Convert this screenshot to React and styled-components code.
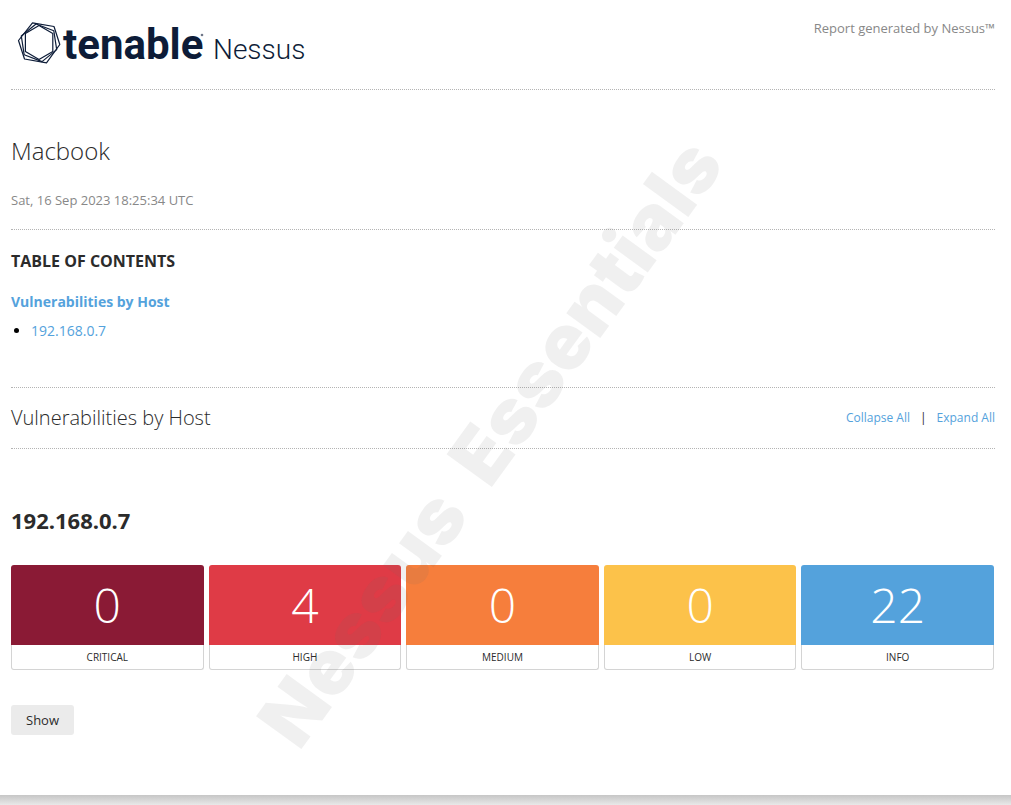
import React, { useState } from 'react';
import styled, { createGlobalStyle } from 'styled-components';

const GlobalStyle = createGlobalStyle`
  * {
    box-sizing: border-box;
  }

  body {
    margin: 0;
    background: #e8e8e8;
    color: #2b2b2b;
    font-family: 'Open Sans', 'Noto Sans', sans-serif;
    font-size: 14px;
    line-height: 20px;
  }

  h1, h2, h3, h4, p, ul {
    margin: 0;
  }
`;

const Report = styled.div`
  position: relative;
  padding: 0 16px 60px 11px;
  background: #fff;
`;

const PageEdge = styled.div`
  height: 10px;
  background: linear-gradient(#c6c6c6, #e8e8e8);
`;

const Header = styled.header`
  display: flex;
  justify-content: space-between;
  align-items: flex-start;
  padding: 18px 0 21px;
  border-bottom: 1px dotted #b4b4b4;
`;

const Logo = styled.svg`
  display: block;
  width: 310px;
  height: 50px;
  font-family: Roboto, sans-serif;
  fill: #0d1c38;
`;

const Muted = styled.p`
  color: #888;
  font-size: 13px;
`;

const Summary = styled.section`
  display: grid;
  gap: 23px;
  padding: 45px 0 19px;
  border-bottom: 1px dotted #b4b4b4;
`;

const Title = styled.h1`
  font-size: 24px;
  font-weight: 300;
  line-height: 32px;
`;

const Contents = styled.nav`
  padding: 20px 0 46px;
  border-bottom: 1px dotted #b4b4b4;
`;

const ContentsTitle = styled.h2`
  margin-bottom: 20px;
  font-size: 16px;
  line-height: 22px;
`;

const Link = styled.a`
  color: #54a2dc;
  font-weight: ${props => (props.$bold ? 700 : 400)};
  text-decoration: none;
`;

const HostLinks = styled.ul`
  margin-top: 9px;
  padding-left: 20px;
  color: #000;
`;

const SectionHeader = styled.div`
  display: flex;
  justify-content: space-between;
  align-items: center;
  padding: 16px 0;
  border-bottom: 1px dotted #b4b4b4;
`;

const SectionTitle = styled.h2`
  font-size: 20px;
  font-weight: 300;
  line-height: 28px;
`;

const Actions = styled.div`
  display: flex;
  gap: 10px;
  font-size: 12px;
`;

const HostTitle = styled.h3`
  margin: 56px 0 30px;
  font-size: 22px;
  line-height: 30px;
`;

const Severities = styled.div`
  display: grid;
  grid-template-columns: repeat(5, 1fr);
  gap: 5px;
  padding-right: 1px;
`;

const Severity = styled.div`
  text-align: center;
`;

const Count = styled.div`
  border-radius: 3px 3px 0 0;
  background: ${props => props.$color};
  color: #fff;
  font-size: 48px;
  font-weight: 300;
  line-height: 80px;
`;

const Label = styled.div`
  border: 1px solid #d4d4d4;
  border-top: 0;
  border-radius: 0 0 3px 3px;
  font-size: 10px;
  line-height: 24px;
`;

const ShowButton = styled.button`
  margin-top: 35px;
  padding: 0 15px;
  border: 0;
  border-radius: 3px;
  background: #ebebeb;
  color: #2b2b2b;
  font-family: inherit;
  font-size: 13px;
  line-height: 30px;
  cursor: pointer;
`;

const Watermark = styled.div`
  position: absolute;
  top: 442px;
  left: 490px;
  display: flex;
  gap: 32px;
  transform: translate(-50%, -50%) rotate(-54deg);
  color: rgba(105, 105, 105, 0.1);
  font-family: Inter, sans-serif;
  font-size: 77px;
  font-weight: 900;
  line-height: 80px;
  white-space: nowrap;
  pointer-events: none;
`;

const severities = [
  { label: 'CRITICAL', count: 0, color: '#8a1a35' },
  { label: 'HIGH', count: 4, color: '#df3b46' },
  { label: 'MEDIUM', count: 0, color: '#f67e3c' },
  { label: 'LOW', count: 0, color: '#fcc24a' },
  { label: 'INFO', count: 22, color: '#54a2dc' },
];

const TenableLogo = () => (
  <Logo viewBox='0 0 310 50' role='img' aria-label='tenable Nessus'>
    <g fill='none' stroke='#0d1c38' strokeWidth='1.2' strokeLinejoin='round'>
      <path d='M28 7.5 L41.8 15.5 V33.5 L28 41.5 L14.4 33.5 V15.5 Z' />
      <path d='M25 6 L42.8 12.8 L45.7 31.6 L31 43.6 L13.2 36.8 L10.3 18 Z' />
      <path d='M21.5 4.8 L43 8.5 L48.8 26.5 L35.5 44.8 L13.5 41 L7.5 22.5 Z' />
    </g>
    <text x='52' y='41' fontSize='42' fontWeight='700'>tenable</text>
    <circle cx='191' cy='17' r='1.3' opacity='0.6' />
    <text x='202' y='41' fontSize='28' fontWeight='300'>Nessus</text>
  </Logo>
);

const App = () => {
  const [open, setOpen] = useState(false);

  return (
    <>
      <GlobalStyle />
      <Report>
        <Header>
          <TenableLogo />
          <Muted>Report generated by Nessus™</Muted>
        </Header>

        <Summary>
          <Title>Macbook</Title>
          <Muted>Sat, 16 Sep 2023 18:25:34 UTC</Muted>
        </Summary>

        <Contents>
          <ContentsTitle>TABLE OF CONTENTS</ContentsTitle>
          <Link href='#hosts' $bold>Vulnerabilities by Host</Link>
          <HostLinks>
            <li>
              <Link href='#host'>192.168.0.7</Link>
            </li>
          </HostLinks>
        </Contents>

        <SectionHeader id='hosts'>
          <SectionTitle>Vulnerabilities by Host</SectionTitle>
          <Actions>
            <Link href='#hosts' onClick={() => setOpen(false)}>Collapse All</Link>
            <span>|</span>
            <Link href='#hosts' onClick={() => setOpen(true)}>Expand All</Link>
          </Actions>
        </SectionHeader>

        <HostTitle id='host'>192.168.0.7</HostTitle>
        <Severities>
          {severities.map(({ label, count, color }) => (
            <Severity key={label}>
              <Count $color={color}>{count}</Count>
              <Label>{label}</Label>
            </Severity>
          ))}
        </Severities>
        <ShowButton type='button' onClick={() => setOpen(!open)}>
          {open ? 'Hide' : 'Show'}
        </ShowButton>

        <Watermark aria-hidden='true'>
          <span>Nessus</span>
          <span>Essentials</span>
        </Watermark>
      </Report>
      <PageEdge />
    </>
  );
};

export default App;
